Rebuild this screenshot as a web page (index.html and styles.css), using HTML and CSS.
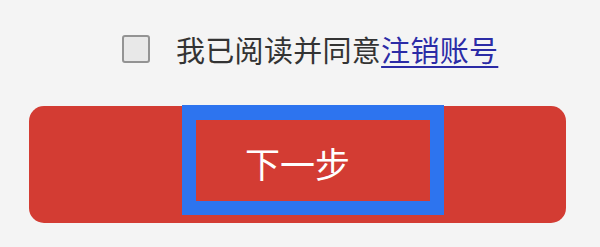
FILE: index.html
```html
<!DOCTYPE html>
<html lang="zh">
<head>
<meta charset="utf-8">
<link rel="stylesheet" href="styles.css">
</head>
<body>
<div class="page">
  <div class="agree">
    <span class="checkbox"></span>
    <span class="agree-text">我已阅读并同意<a class="link" href="#">注销账号</a></span>
  </div>
  <div class="btn-wrap">
    <div class="btn">下一步</div>
    <div class="highlight"></div>
  </div>
</div>
</body>
</html>
```
FILE: styles.css
```css
html, body {
  margin: 0;
  padding: 0;
  background: #f4f4f4;
}
.page {
  width: 600px;
  height: 247px;
  box-sizing: border-box;
  padding-top: 35px;
  font-family: "Noto Sans CJK SC", "Noto Sans", sans-serif;
}
.agree {
  display: flex;
  align-items: center;
  height: 28px;
  padding-left: 122px;
  gap: 26px;
}
.checkbox {
  width: 28px;
  height: 28px;
  box-sizing: border-box;
  border: 2px solid #939393;
  border-radius: 3px;
  background: #e8e8e8;
  flex: none;
}
.agree-text {
  font-size: 29px;
  letter-spacing: 0.3px;
  line-height: 28px;
  color: #333333;
  white-space: nowrap;
}
.link {
  color: #2b2ba6;
  text-decoration: underline;
  text-underline-offset: 4px;
  text-decoration-thickness: 2px;
}
.btn-wrap {
  position: relative;
  margin: 43px 34px 0 29px;
}
.btn {
  height: 117px;
  border-radius: 15px;
  background: #d33c33;
  color: #ffffff;
  font-size: 35px;
  display: flex;
  align-items: center;
  justify-content: center;
  padding-bottom: 4px;
  box-sizing: border-box;
}
.highlight {
  position: absolute;
  left: 153px;
  top: -1px;
  width: 262px;
  height: 110px;
  box-sizing: border-box;
  border: 14px solid #2d74ef;
  border-top-width: 15px;
}
```
